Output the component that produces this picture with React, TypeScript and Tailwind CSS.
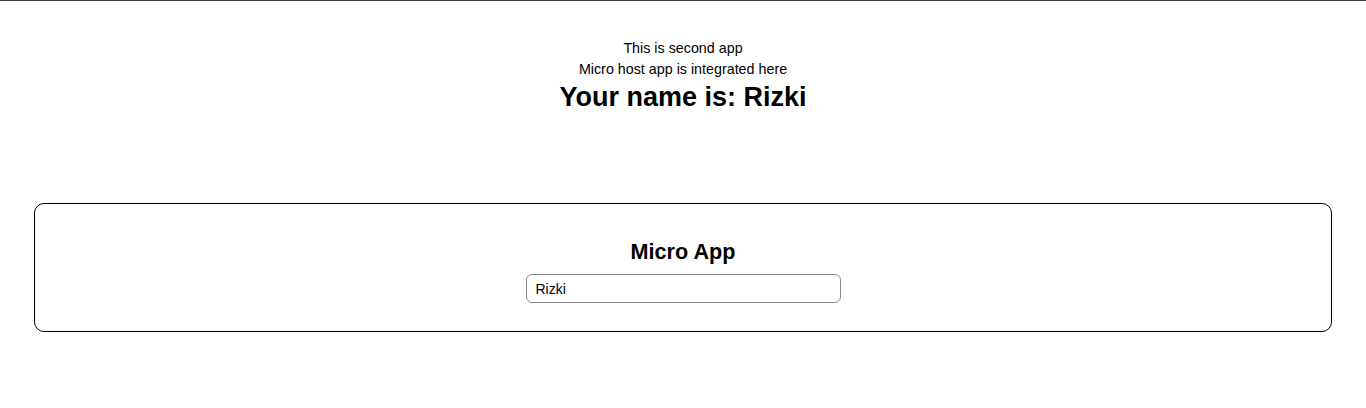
import { useState } from 'react'

function MicroApp({ name, onChange }: { name: string; onChange: (value: string) => void }) {
  return (
    <div className="mx-[34px] flex flex-col items-center rounded-[10px] border border-black pt-[35px] pb-[28px]">
      <h2 className="text-[21.6px] font-bold leading-[26px]">Micro App</h2>
      <input
        value={name}
        onChange={event => onChange(event.target.value)}
        className="mt-[9px] h-[29px] w-[315px] rounded-[6px] border border-[#8a8a8a] px-[9px] text-[14px] text-black outline-none"
      />
    </div>
  )
}

export default function App() {
  const [name, setName] = useState('Rizki')

  return (
    <div className="min-h-[408px] border-t border-[#3c3c3c] bg-white font-['Liberation_Sans',Arial,sans-serif] text-black">
      <div className="flex flex-col items-center pt-[37px]">
        <p className="text-[14.3px] leading-[21px]">This is second app</p>
        <p className="text-[14.3px] leading-[21px]">Micro host app is integrated here</p>
        <h1 className="mt-[2px] text-[27px] font-bold leading-[30px]">Your name is: {name}</h1>
      </div>
      <div className="mt-[91px]">
        <MicroApp name={name} onChange={setName} />
      </div>
    </div>
  )
}
